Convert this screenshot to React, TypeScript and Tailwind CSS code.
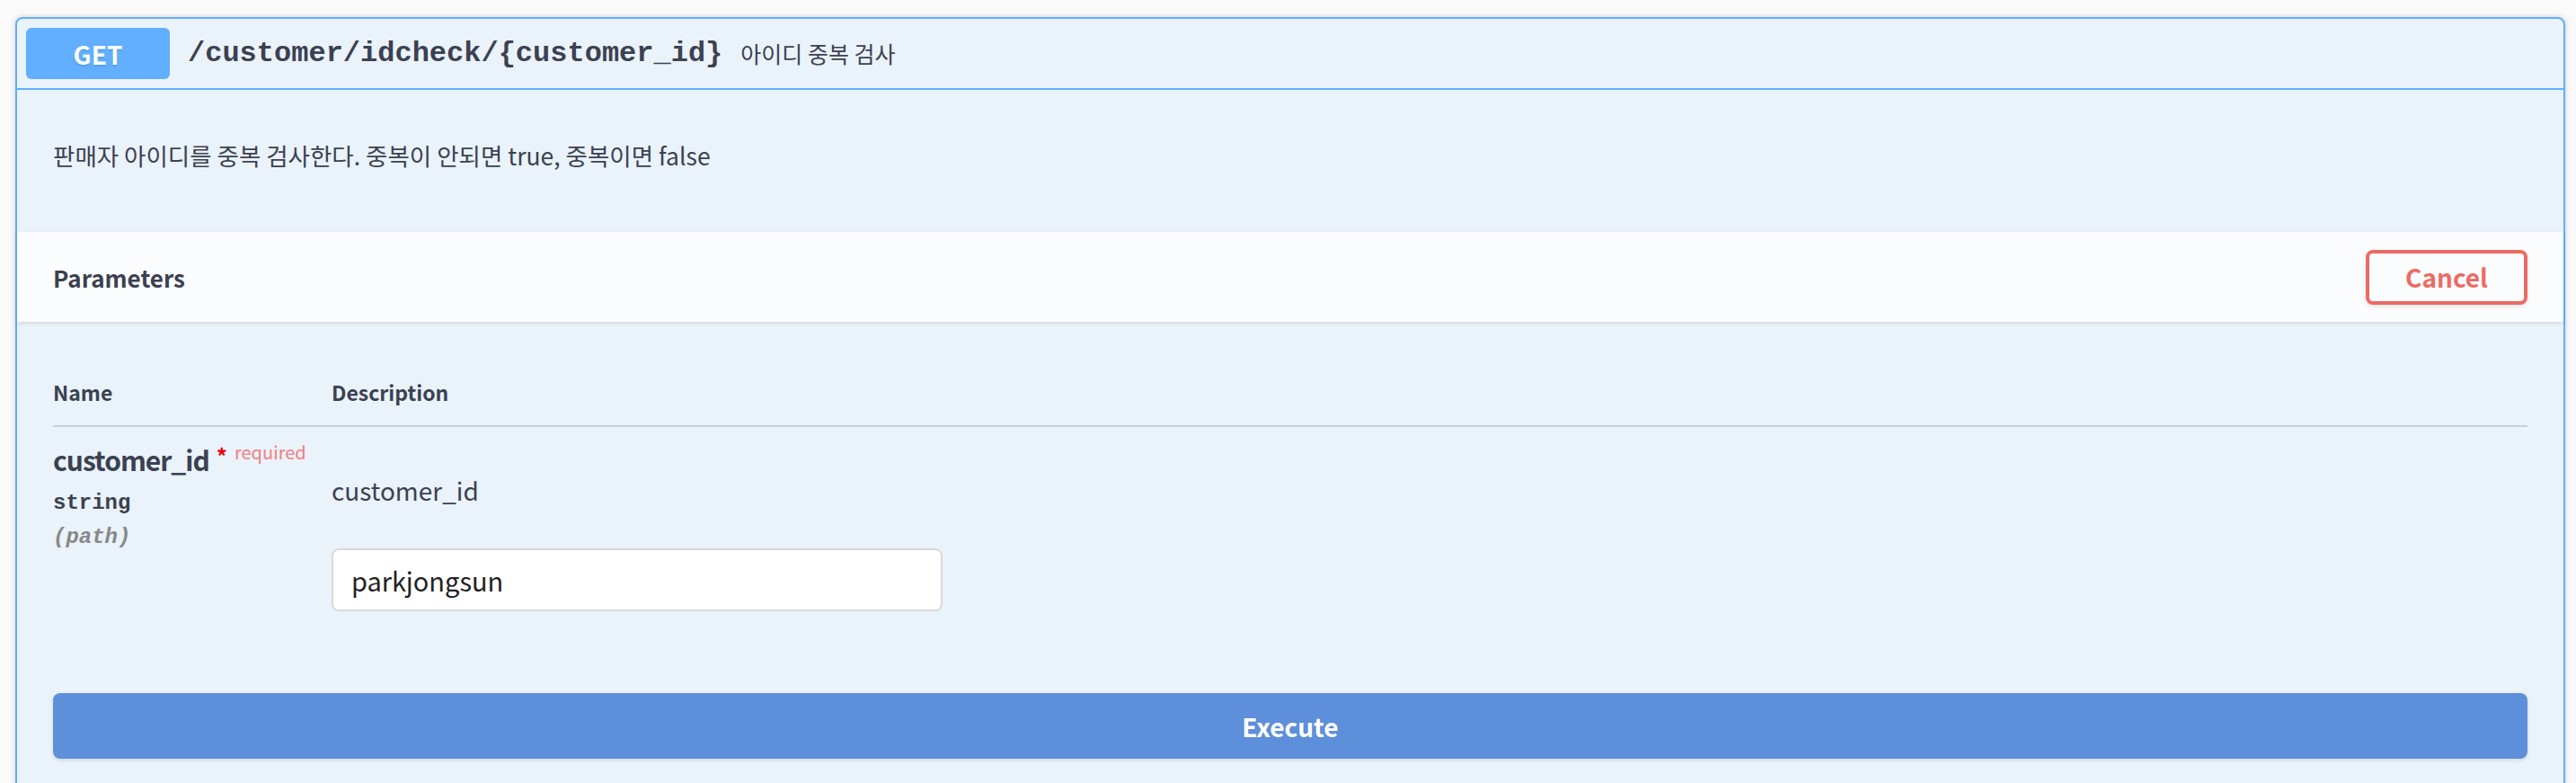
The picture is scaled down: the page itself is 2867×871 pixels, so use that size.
import React from 'react';

const sans = "font-['Noto_Sans_CJK_KR','Noto_Sans',sans-serif]";
const mono = "font-['Liberation_Mono',monospace]";

export default function App() {
  return (
    <div className={`min-h-screen bg-[#fafafa] pt-[19px] pl-[17px] pr-[12px] ${sans}`}>
      <div className="rounded-[8px] border-2 border-[#61affe] bg-[rgba(97,175,254,0.1)] shadow-[0_0_6px_rgba(0,0,0,0.19)] text-[#3b4151]">
        {/* summary */}
        <div className="flex items-center p-[10px] border-b-2 border-[#61affe]">
          <div className="w-[160px] h-[57px] rounded-[6px] bg-[#61affe] text-white font-bold text-[28px] flex items-center justify-center [text-shadow:0_2px_0_rgba(0,0,0,0.1)]">
            GET
          </div>
          <span className={`px-[20px] text-[32px] font-bold ${mono}`}>/customer/idcheck/&#123;customer_id&#125;</span>
          <span className="text-[25px]">아이디 중복 검사</span>
        </div>

        {/* description */}
        <div className="pt-[52px] pb-[64px] px-[40px]">
          <p className="text-[26.5px] leading-[42px]">판매자 아이디를 중복 검사한다. 중복이 안되면 true, 중복이면 false</p>
        </div>

        {/* parameters header */}
        <div className="h-[100px] px-[40px] flex items-center justify-between bg-white/80 shadow-[0_2px_4px_rgba(0,0,0,0.1)]">
          <h4 className="text-[26px] font-semibold">Parameters</h4>
          <button className="w-[180px] h-[61px] rounded-[8px] border-4 border-[#ec6b64] text-[#ec6b64] font-bold text-[28px] bg-transparent shadow-[0_2px_4px_rgba(0,0,0,0.1)]">
            Cancel
          </button>
        </div>

        {/* parameters table */}
        <div className="px-[40px] pt-[41px]">
          <div className="flex h-[76px] items-center border-b-2 border-[#c9ced8] text-[23px] font-semibold">
            <div className="w-[310px]">Name</div>
            <div>Description</div>
          </div>
          <div className="flex">
            <div className="w-[310px] pt-[20px]">
              <div className="flex items-start leading-[32px]">
                <span className="text-[30px] font-semibold tracking-[-1px]">customer_id</span>
                <span className="ml-[8px] text-[24px] text-red-600 leading-[24px] font-bold">*</span>
                <span className="ml-[8px] text-[20px] text-[#f08080] leading-[20px] -mt-[2px]">required</span>
              </div>
              <div className={`mt-[19px] text-[24px] leading-[28px] font-bold ${mono}`}>string</div>
              <div className={`mt-[10px] text-[24px] leading-[28px] font-bold italic text-[#888] ${mono}`}>(path)</div>
            </div>
            <div className="pt-[49px]">
              <p className="text-[28px] leading-[42px]">customer_id</p>
              <input
                readOnly
                value="parkjongsun"
                className="mt-[44px] w-[680px] h-[70px] rounded-[8px] border-2 border-[#d9d9d9] bg-white px-[20px] text-[29px] text-[#222] outline-none"
              />
            </div>
          </div>
        </div>

        {/* execute */}
        <div className="px-[40px] pt-[91px] pb-[40px]">
          <button className="w-full h-[73px] rounded-[8px] bg-[#5d8fdb] text-white font-bold text-[28px] shadow-[0_2px_4px_rgba(0,0,0,0.1)]">
            Execute
          </button>
        </div>
      </div>
    </div>
  );
}
